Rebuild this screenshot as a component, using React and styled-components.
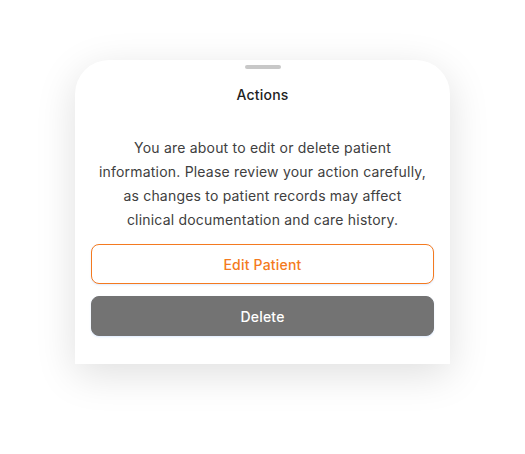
import React from "react";
import styled, { createGlobalStyle } from "styled-components";

const Global = createGlobalStyle`
  html, body { margin: 0; padding: 0; background: #fff; }
  body { font-family: Inter, "Open Sans", "Liberation Sans", sans-serif; }
`;

const Page = styled.div`
  width: 525px;
  height: 454px;
  display: flex;
  justify-content: center;
  padding-top: 60px;
  box-sizing: border-box;
`;

const Sheet = styled.div`
  width: 375px;
  height: 304px;
  box-sizing: border-box;
  background: #fff;
  border-radius: 34px 34px 0 0;
  box-shadow: 0 10px 40px rgba(0, 0, 0, 0.13);
  display: flex;
  flex-direction: column;
  align-items: center;
  padding: 5px 16px 28px;
`;

const Handle = styled.div`
  width: 36px;
  height: 4px;
  border-radius: 2px;
  background: #c8c8c8;
`;

const Title = styled.h2`
  margin: 16px 0 0;
  font-size: 14px;
  line-height: 20px;
  font-weight: 500;
  letter-spacing: 0.2px;
  color: #222;
`;

const Message = styled.p`
  margin: 31px 0 0;
  font-size: 14px;
  line-height: 24px;
  letter-spacing: 0.2px;
  color: #404040;
  text-align: center;
  padding: 0 4px;
`;

const Actions = styled.div`
  margin-top: 12px;
  width: 100%;
  display: flex;
  flex-direction: column;
  gap: 12px;
`;

const Button = styled.button`
  width: 100%;
  height: 40px;
  border-radius: 8px;
  font-family: inherit;
  font-size: 14px;
  font-weight: 500;
  letter-spacing: 0.2px;
  cursor: pointer;
  box-shadow: 0 1px 2px rgba(80, 150, 255, 0.18);
  border: 1px solid ${(p) => (p.$variant === "outline" ? "#f47a20" : "#737373")};
  background: ${(p) => (p.$variant === "outline" ? "#fff" : "#737373")};
  color: ${(p) => (p.$variant === "outline" ? "#f47a20" : "#fff")};
`;

export default function App() {
  return (
    <>
      <Global />
      <Page>
        <Sheet>
          <Handle />
          <Title>Actions</Title>
          <Message>
            You are about to edit or delete patient
            <br />
            information. Please review your action carefully,
            <br />
            as changes to patient records may affect
            <br />
            clinical documentation and care history.
          </Message>
          <Actions>
            <Button $variant="outline">Edit Patient</Button>
            <Button $variant="solid">Delete</Button>
          </Actions>
        </Sheet>
      </Page>
    </>
  );
}
